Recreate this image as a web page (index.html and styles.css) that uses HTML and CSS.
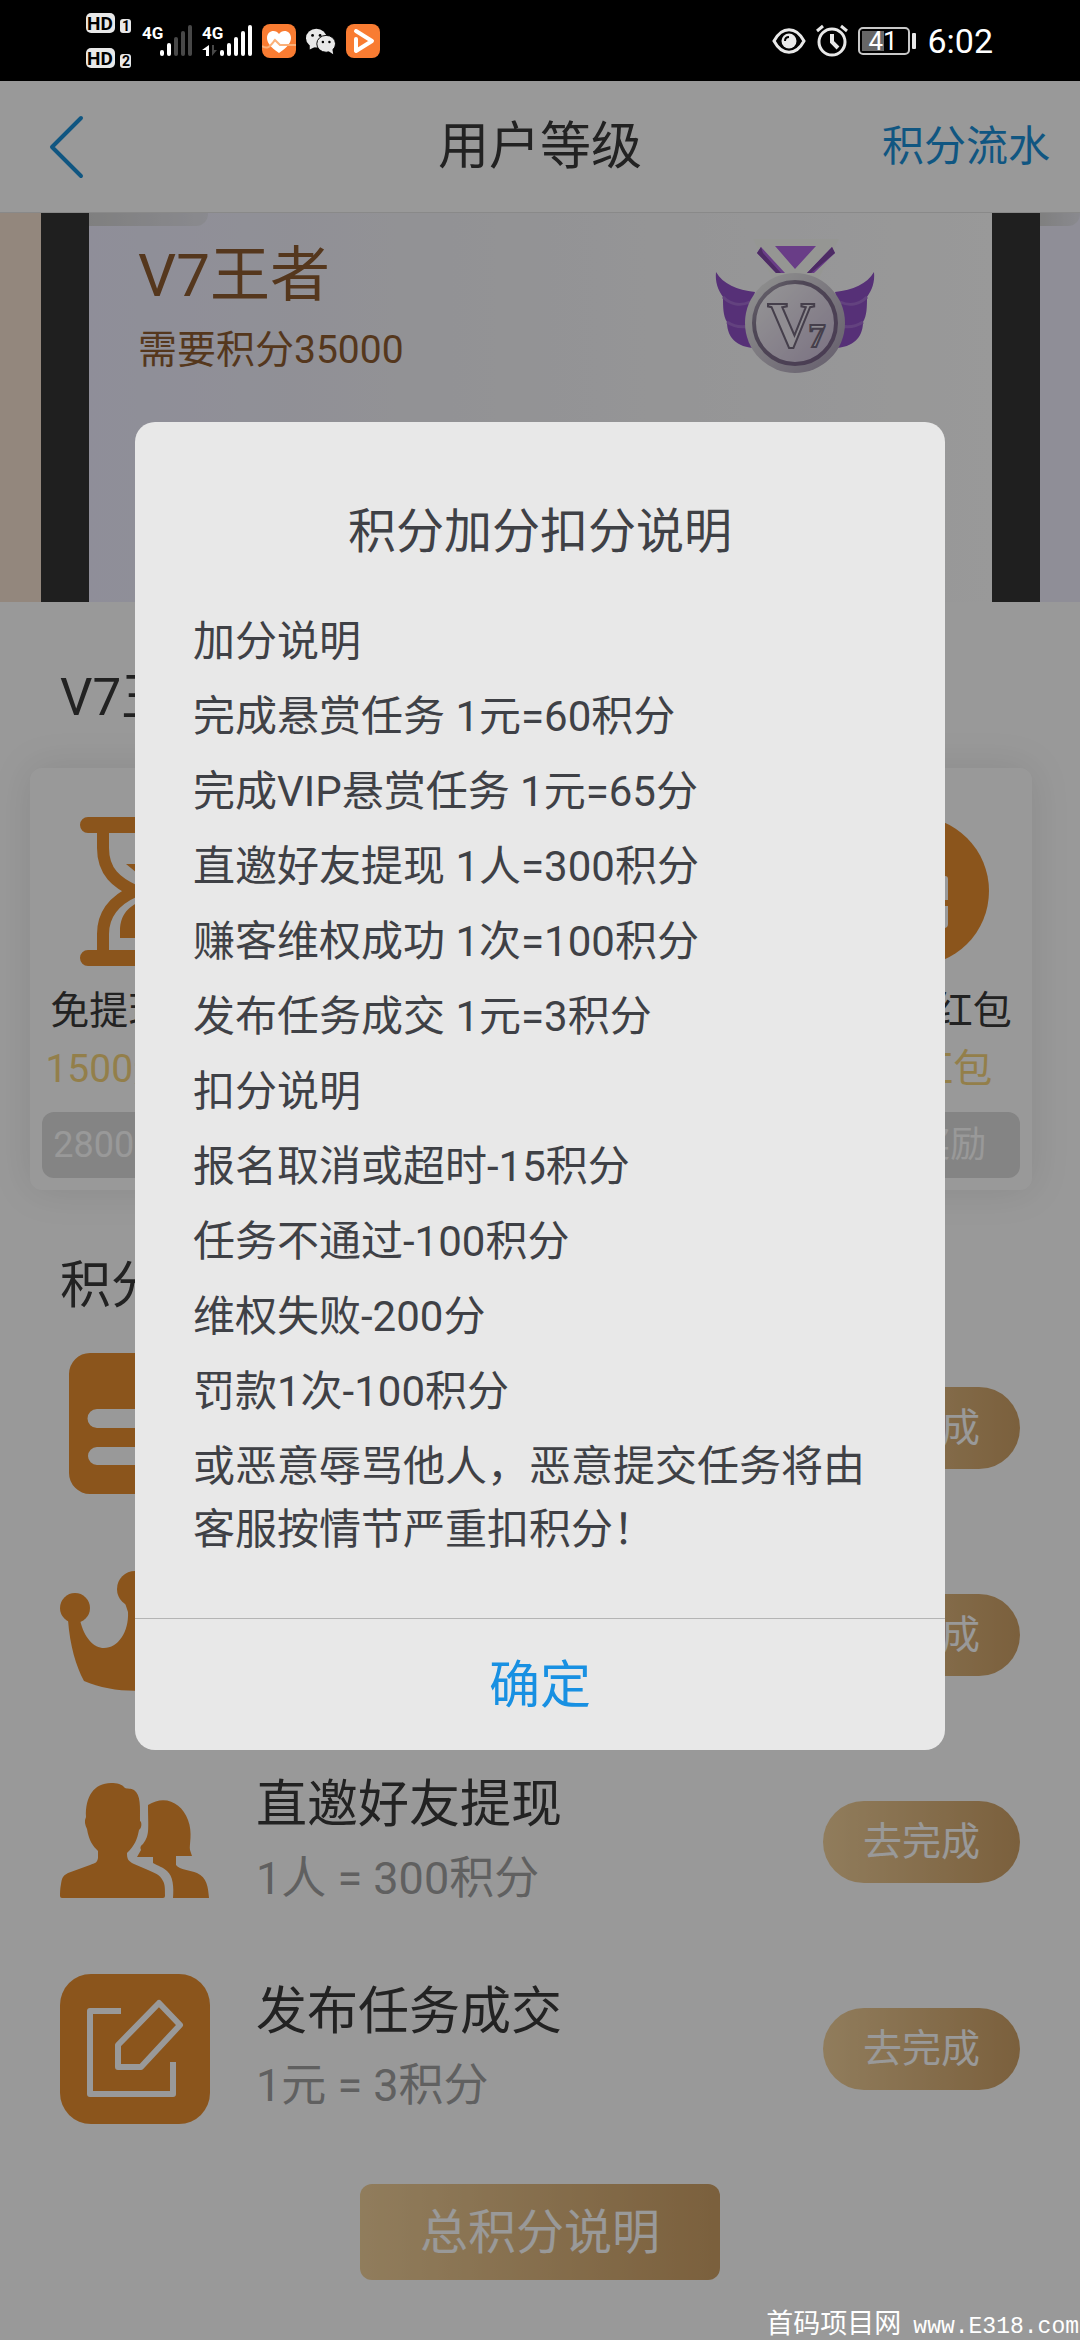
FILE: index.html
```html
<!DOCTYPE html>
<html lang="zh-CN">
<head>
<meta charset="utf-8">
<meta name="viewport" content="width=device-width, initial-scale=1">
<title>用户等级</title>
<link rel="stylesheet" href="styles.css">
</head>
<body>
<div class="status">
  <div class="status-left">
    <svg class="hd" width="46" height="58" viewBox="0 0 46 58">
      <rect x="0" y="1" width="29" height="20" rx="5" fill="#e8e8e8"/>
      <rect x="34" y="7" width="11" height="14" rx="3" fill="#e8e8e8"/>
      <rect x="0" y="36" width="29" height="20" rx="5" fill="#e8e8e8"/>
      <rect x="34" y="42" width="11" height="14" rx="3" fill="#e8e8e8"/>
      <text class="hd-text" x="14" y="18">HD</text>
      <text class="hd-text" x="14" y="53">HD</text>
      <text class="hd-num" x="40" y="19">1</text>
      <text class="hd-num" x="40" y="54">2</text>
    </svg>
    <svg class="signal" width="50" height="34" viewBox="0 0 50 34">
      <text class="net" x="0" y="15">4G</text>
      <g fill="#fff"><rect x="18" y="26" width="4" height="6" rx="2"/><rect x="25" y="19" width="4" height="13" rx="2"/></g>
      <g fill="#484848"><rect x="32" y="13" width="4" height="19" rx="2"/><rect x="39" y="7" width="4" height="25" rx="2"/><rect x="46" y="1" width="4" height="31" rx="2"/></g>
    </svg>
    <svg class="signal" width="50" height="34" viewBox="0 0 50 34">
      <text class="net" x="0" y="15">4G</text>
      <path d="M7 21v11h-3v-6h-4z" fill="#fff"/><path d="M10 21v11l5-6h-3v-5z" fill="#484848"/>
      <g fill="#fff"><rect x="18" y="26" width="4" height="6" rx="2"/><rect x="25" y="19" width="4" height="13" rx="2"/><rect x="32" y="13" width="4" height="19" rx="2"/><rect x="39" y="7" width="4" height="25" rx="2"/><rect x="46" y="1" width="4" height="31" rx="2"/></g>
    </svg>
    <svg class="app" width="34" height="34" viewBox="0 0 34 34">
      <rect width="34" height="34" rx="8" fill="#f97c32"/>
      <path d="M17 29C8 23 5 18 5 14C5 6 14 5 17 10C20 5 29 6 29 14C29 18 26 23 17 29Z" fill="#fff"/>
      <path d="M0 22C6 26 8 22 13 16L18 21H34" fill="none" stroke="#fbb078" stroke-width="2"/>
    </svg>
    <svg class="app" width="30" height="28" viewBox="0 0 32 28">
      <ellipse cx="11" cy="11" rx="11" ry="10" fill="#e8e8e8"/><path d="M4 17v6l6-3z" fill="#e8e8e8"/>
      <ellipse cx="21.500" cy="17" rx="10" ry="9" fill="#e8e8e8" stroke="#000"/><path d="M23 24l6 4-1-6z" fill="#e8e8e8"/>
      <g><circle cx="7" cy="8" r="1.500"/><circle cx="15" cy="8" r="1.500"/><circle cx="18" cy="15" r="1.300"/><circle cx="25" cy="15" r="1.300"/></g>
    </svg>
    <svg class="app" width="34" height="34" viewBox="0 0 34 34">
      <rect width="34" height="34" rx="8" fill="#f97c32"/>
      <path d="M10 7L26 17L10 27V15" fill="none" stroke="#fff" stroke-width="4" stroke-linecap="round" stroke-linejoin="round"/>
    </svg>
  </div>
  <div class="status-right">
    <svg width="34" height="28" viewBox="0 0 34 28">
      <path d="M2 14C10 -1 24 -1 32 14C24 29 10 29 2 14Z" fill="none" stroke="#e8e8e8" stroke-width="3"/>
      <circle cx="17" cy="14" r="7.500" fill="#e8e8e8"/><path d="M13 14c0-3 2-4 4-4" fill="none" stroke="#000" stroke-width="2"/>
    </svg>
    <svg width="32" height="33" viewBox="0 0 32 33">
      <circle cx="16" cy="18" r="13" fill="none" stroke="#e8e8e8" stroke-width="3"/>
      <path d="M16 10v8l6 6" fill="none" stroke="#e8e8e8" stroke-width="4"/>
      <path d="M1 7l6-5M31 7l-6-5" stroke="#e8e8e8" stroke-width="3"/>
    </svg>
    <svg class="battery" width="59" height="28" viewBox="0 0 59 28">
      <rect x="1" y="1" width="50" height="26" rx="4" fill="none" stroke="#c8c8c8" stroke-width="2"/>
      <rect x="4" y="4" width="22" height="20" fill="#666"/>
      <rect x="54" y="6" width="4" height="16" rx="1" fill="#e8e8e8"/>
      <text class="charge" x="25" y="23">41</text>
    </svg>
    <span class="clock">6:02</span>
  </div>
</div>

<main class="screen">
  <header class="bar">
    <button class="back" aria-label="返回">
      <svg width="36" height="66" viewBox="0 0 36 66"><path d="M33 4L4 33L33 62" fill="none" stroke="#1c90d8" stroke-width="4" stroke-linecap="round" stroke-linejoin="round"/></svg>
    </button>
    <h1>用户等级</h1>
    <a class="log" href="#log">积分流水</a>
  </header>

  <section class="levels">
    <div class="level level-prev"></div>
    <div class="level level-now">
      <span class="tag"></span>
      <div class="level-text">
        <div class="level-name">V7王者</div>
        <div class="level-need">需要积分35000</div>
      </div>
      <svg class="medal" width="160" height="140" viewBox="0 0 160 140">
        <defs>
          <linearGradient id="rim" x1="0" y1="0" x2="1" y2="1"><stop offset="0" stop-color="#f4f6f2"/><stop offset="1" stop-color="#a79bb4"/></linearGradient>
          <linearGradient id="face" x1="0" y1="0" x2="1" y2="1"><stop offset="0" stop-color="#fbfbfb"/><stop offset="1" stop-color="#cbbcd8"/></linearGradient>
          <linearGradient id="ring" x1="0" y1="0" x2="1" y2="1"><stop offset="0" stop-color="#b9b3c0"/><stop offset=".3" stop-color="#83778f"/><stop offset="1" stop-color="#7a638a"/></linearGradient>
          <g id="wing">
            <path d="M1 36C8 48 22 54 40 56L32 86L38 112C18 110 12 98 12 86C8 80 8 70 8 61C3 54 0 46 1 36Z" fill="#8f51c6"/>
            <path d="M8 61C16 69 26 70 35 66M12 86C18 90 26 92 34 90" fill="none" stroke="#a56fd4" stroke-width="3"/>
          </g>
        </defs>
        <path d="M38 3H124L104 42H57Z" fill="#f9faf6"/>
        <path d="M46 11L42 17L61 37H70ZM60 10H101L80 33ZM117 11L120 17L99 37H92Z" fill="#af66e2"/>
        <path d="M46 11L48 17L66 37H61L42 17ZM120 17L117 11L92 37H96Z" fill="#8148a8"/>
        <use href="#wing"/><use href="#wing" transform="translate(160 0) scale(-1 1)"/>
        <circle cx="80" cy="87" r="50" fill="url(#rim)"/>
        <circle cx="80" cy="87" r="41" fill="url(#face)" stroke="url(#ring)" stroke-width="4"/>
        <text class="medal-v" x="76" y="111">V</text>
        <text class="medal-n" x="102" y="111">7</text>
      </svg>
    </div>
    <div class="level level-next"><span class="tag"></span></div>
  </section>

  <h2>V7王者特权</h2>
  <section class="perks">
    <div class="perk">
      <svg width="150" height="150" viewBox="0 0 150 150">
        <path d="M15 9H135M15 142H135" stroke="#e88e30" stroke-width="16" stroke-linecap="round"/>
        <path d="M30 12V32C30 56 44 67 62 75C44 83 30 96 30 118V138M120 12V32C120 56 106 67 88 75C106 83 120 96 120 118V138" fill="none" stroke="#e88e30" stroke-width="12"/>
        <path d="M53 48H97L75 66ZM47 122V112C49 92 62 88 75 82C88 88 101 92 103 112V122Z" fill="#e88e30"/>
      </svg>
      <div class="perk-name">免提现额度</div>
      <div class="perk-value">1500元额度</div>
      <button class="perk-button">2800元奖励</button>
    </div>
    <div class="perk"></div>
    <div class="perk"></div>
    <div class="perk">
      <svg width="150" height="150" viewBox="0 0 150 150">
        <circle cx="75" cy="75" r="75" fill="#e88e30"/>
        <path d="M42 60H106Q109 60 109 63V84H42ZM42 90H109V108Q109 112 105 112H45Q42 112 42 108Z" fill="#fff"/>
      </svg>
      <div class="perk-name">升级送红包</div>
      <div class="perk-value">升级红包</div>
      <button class="perk-button">领取奖励</button>
    </div>
  </section>

  <h2>积分任务</h2>
  <ul class="tasks">
    <li>
      <svg width="150" height="150" viewBox="0 0 150 150">
        <path fill-rule="evenodd" d="M30 0H120A21 21 0 0 1 141 21V76L76 141H30A21 21 0 0 1 9 120V21A21 21 0 0 1 30 0ZM37 56A9 9 0 0 0 37 75H110A9 9 0 0 0 110 56ZM37 94A9 9 0 0 0 37 112H76A9 9 0 0 0 76 94Z" fill="#e88e30"/>
      </svg>
      <div class="task-text"><div class="task-name">完成悬赏任务</div><div class="task-rate">1元 = 60积分</div></div>
      <button class="go">去完成</button>
    </li>
    <li>
      <svg width="150" height="150" viewBox="0 0 150 150">
        <g fill="#e88e30"><circle cx="15" cy="48" r="15"/><circle cx="135" cy="48" r="15"/><circle cx="75" cy="29" r="18"/>
        <path d="M8 60H20C24 78 34 88 44 88C58 88 69 72 68 52L64 40H86L82 52C81 72 92 88 106 88C116 88 126 78 130 60H142C140 86 134 106 126 121C96 134 54 134 24 121C16 106 10 86 8 60Z"/></g>
      </svg>
      <div class="task-text"><div class="task-name">完成VIP悬赏任务</div><div class="task-rate">1元 = 65积分</div></div>
      <button class="go">去完成</button>
    </li>
    <li>
      <svg width="150" height="150" viewBox="0 0 150 150">
        <g fill="#e88e30">
        <path d="M51 16C34 16 25 30 26 50C24 54 25 58 27 62C29 74 33 79 38 84V91C37 96 35 96 30 98L8 106C2 109 2 112 1 117C0 122 0 126 0 129Q0 131 2 131H103Q105 131 105 129C105 122 105 117 103 114C100 107 94 106 88 103L74 97C68 94 67 92 67 86C75 78 77 73 79 63C82 61 82 55 80 54C80 40 81 28 74 23C71 21 67 22 65 21C62 17 57 16 51 16Z"/>
        <path d="M88 38C105 27 122 36 128 53C133 66 129 78 130 83L132 89H116V98C120 103 130 103 137 106C147 111 148 119 149 131H113C114 120 113 109 107 104C103 100 98 99 93 96V90H77L81 83C80 81 80 79 83 77C90 68 88 62 88 38Z"/></g>
      </svg>
      <div class="task-text"><div class="task-name">直邀好友提现</div><div class="task-rate">1人 = 300积分</div></div>
      <button class="go">去完成</button>
    </li>
    <li>
      <svg width="150" height="150" viewBox="0 0 150 150">
        <rect width="150" height="150" rx="31" fill="#e88e30"/>
        <path d="M61 37H30V120H113V88M58 93H81L120 51L99 29L58 71Z" fill="none" stroke="#fff" stroke-width="6" stroke-linejoin="round"/>
      </svg>
      <div class="task-text"><div class="task-name">发布任务成交</div><div class="task-rate">1元 = 3积分</div></div>
      <button class="go">去完成</button>
    </li>
  </ul>
  <button class="rules">总积分说明</button>

  <div class="mask">
    <div class="dialog" role="dialog" aria-modal="true" aria-labelledby="dialog-title">
      <h3 id="dialog-title">积分加分扣分说明</h3>
      <div class="dialog-body">
        <p>加分说明</p>
        <p>完成悬赏任务 1元=60积分</p>
        <p>完成VIP悬赏任务 1元=65分</p>
        <p>直邀好友提现 1人=300积分</p>
        <p>赚客维权成功 1次=100积分</p>
        <p>发布任务成交 1元=3积分</p>
        <p>扣分说明</p>
        <p>报名取消或超时-15积分</p>
        <p>任务不通过-100积分</p>
        <p>维权失败-200分</p>
        <p>罚款1次-100积分</p>
        <p>或恶意辱骂他人，恶意提交任务将由客服按情节严重扣积分！</p>
      </div>
      <button class="confirm">确定</button>
    </div>
  </div>
  <div class="mark"><span>首码项目网</span><span class="mark-url">www.E318.com</span></div>
</main>
</body>
</html>
```
FILE: styles.css
```css
* {
  box-sizing: border-box;
}

body {
  margin: 0;
  min-height: 100vh;
  display: flex;
  flex-direction: column;
  background: #fff;
  color: #3a3a3a;
  font-family: Roboto, "Noto Sans CJK SC", sans-serif;
}

h1, h2, h3, p, ul {
  margin: 0;
  padding: 0;
  font-weight: 400;
}

button {
  border: 0;
  padding: 0 0 8px;
  background: none;
  font-family: inherit;
}

svg {
  display: block;
  flex: none;
}

/* System status bar */
.status {
  height: 81px;
  padding: 0 87px 0 86px;
  display: flex;
  justify-content: space-between;
  align-items: center;
  background: #000;
  color: #fff;
}

.status-left {
  display: flex;
  align-items: center;
  gap: 10px;
}

.status-right {
  display: flex;
  align-items: center;
  gap: 10px;
}

.hd-text, .hd-num {
  font-size: 19px;
  font-weight: 700;
  text-anchor: middle;
}

.hd-num {
  font-size: 14px;
}

.net {
  font-family: Roboto, sans-serif;
  font-size: 17px;
  font-weight: 700;
  fill: #fff;
}

.charge {
  font-size: 26px;
  fill: #fff;
  text-anchor: middle;
}

.clock {
  font-size: 34px;
  line-height: 40px;
}

/* Page */
.screen {
  position: relative;
  flex: 1;
  display: flex;
  flex-direction: column;
  overflow: hidden;
  padding-bottom: 60px;
}

.bar {
  height: 132px;
  padding: 0 30px;
  display: grid;
  grid-template-columns: 1fr auto 1fr;
  align-items: center;
  border-bottom: 1px solid #e4e4e4;
}

.back {
  justify-self: start;
  padding: 0 18px;
}

.bar h1 {
  font-size: 51px;
  line-height: 64px;
}

.log {
  justify-self: end;
  font-size: 42px;
  line-height: 56px;
  color: #1c90d8;
  text-decoration: none;
}

.levels {
  display: grid;
  grid-template-columns: 41px 1fr 40px;
  gap: 48px;
  height: 389px;
  background: #343434;
}

.level {
  position: relative;
  background: linear-gradient(90deg, #eeedff, #f4f4f8 40%, #fff);
}

.level-prev {
  background: #f6e1d1;
}

.level-next {
  background: #eeedfc;
}

.level-now {
  display: flex;
  justify-content: space-between;
  align-items: flex-start;
  padding: 23px 117px 0 49px;
}

.tag {
  position: absolute;
  top: 0;
  left: 0;
  width: 119px;
  max-width: 100%;
  height: 13px;
  border-bottom-right-radius: 12px;
  background: linear-gradient(90deg, #d4d4d4, #e6e6ee);
}

.level-text {
  padding-top: 3px;
  color: #8e5d31;
}

.level-name {
  font-size: 60px;
  line-height: 74px;
}

.level-need {
  font-size: 39px;
  line-height: 74px;
}

.medal-v, .medal-n {
  font-family: "Liberation Serif", serif;
  font-weight: 700;
  font-size: 66px;
  text-anchor: middle;
  fill: #f0ecf4;
  stroke: #74697e;
  stroke-width: 2;
}

.medal-n {
  font-size: 34px;
}

h2 {
  padding: 60px 60px 0;
  font-size: 51px;
  line-height: 72px;
}

.perks {
  margin: 34px 48px 0 30px;
  padding: 48px 12px 12px;
  display: grid;
  grid-template-columns: repeat(4, 1fr);
  gap: 44px;
  border-radius: 12px;
  background: #fff;
  box-shadow: 0 0 40px rgba(0, 0, 0, .1);
}

.perk {
  display: flex;
  flex-direction: column;
  align-items: center;
  white-space: nowrap;
}

.perk-name, .perk-value {
  font-size: 39px;
  line-height: 58px;
}

.perk-name {
  margin-top: 16px;
}

.perk-value {
  color: #f6d47c;
}

.perk-button {
  width: 100%;
  height: 66px;
  margin-top: 14px;
  border-radius: 12px;
  background: #dcdcdc;
  color: #fff;
  font-size: 36px;
}

.tasks {
  list-style: none;
  margin: 31px 60px 60px;
  display: flex;
  flex-direction: column;
  gap: 57px;
}

.tasks li {
  display: flex;
  align-items: center;
  gap: 46px;
}

.task-text {
  flex: 1;
}

.task-name {
  font-size: 51px;
  line-height: 74px;
}

.task-rate {
  font-size: 45px;
  line-height: 74px;
  color: #a0a0a0;
}

.go, .rules {
  background: linear-gradient(90deg, #f1d09a, #cda066);
  color: #fff;
}

.go {
  width: 197px;
  height: 82px;
  border-radius: 41px;
  font-size: 39px;
}

.rules {
  align-self: center;
  width: 360px;
  height: 96px;
  border-radius: 12px;
  font-size: 48px;
}

/* Dialog */
.mask {
  position: absolute;
  inset: 0;
  display: flex;
  justify-content: center;
  align-items: flex-start;
  padding-top: 341px;
  background: rgba(0, 0, 0, .4);
}

.dialog {
  width: 75%;
  display: flex;
  flex-direction: column;
  border-radius: 20px;
  background: #e8e8e8;
  color: #3f4146;
}

.dialog h3 {
  padding-top: 78px;
  font-size: 48px;
  line-height: 64px;
  text-align: center;
}

.dialog-body {
  display: flex;
  flex-direction: column;
  gap: 12px;
  padding: 46px 58px 57px;
  font-size: 42px;
  line-height: 63px;
}

.confirm {
  height: 132px;
  border-top: 1px solid #b4b4b4;
  color: #1890e2;
  font-size: 51px;
}

.mark {
  position: absolute;
  right: 1px;
  bottom: 0;
  display: flex;
  align-items: baseline;
  gap: 12px;
  color: #fff;
  font-size: 27px;
  line-height: 26px;
}

.mark-url {
  font-family: "Liberation Mono", monospace;
  font-size: 23px;
}
```
